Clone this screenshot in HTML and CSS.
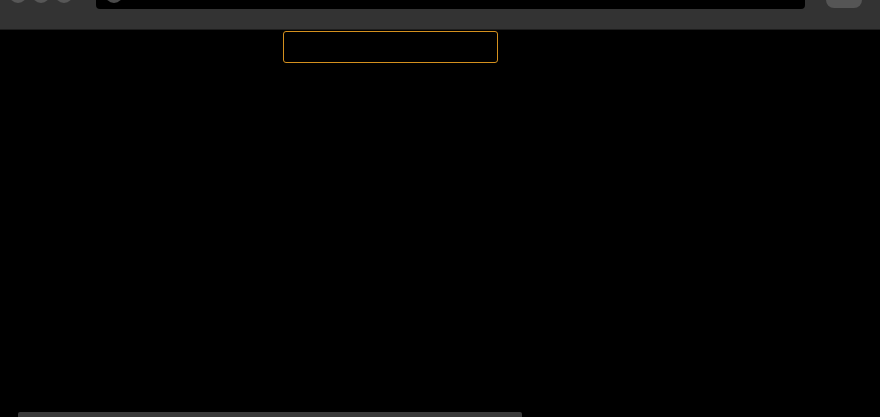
FILE: index.html
```html
<!DOCTYPE html>
<html>
<head>
<meta charset="utf-8">
<link rel="stylesheet" href="styles.css">
</head>
<body>
<div class="app">
  <header class="toolbar">
    <div class="toolbar-row">
      <div class="lights">
        <span class="light"></span>
        <span class="light"></span>
        <span class="light"></span>
      </div>
      <div class="address">
        <span class="site-icon"></span>
      </div>
      <span class="pill"></span>
    </div>
  </header>
  <main class="content">
    <div class="focus-box"></div>
    <div class="hscroll"></div>
  </main>
</div>
</body>
</html>
```
FILE: styles.css
```css
html, body {
  margin: 0;
  padding: 0;
  background: #000;
  height: 100%;
  overflow: hidden;
  font-family: "Liberation Sans", Arial, sans-serif;
}
.app {
  display: flex;
  flex-direction: column;
  height: 417px;
}
.toolbar {
  height: 29px;
  background: #333333;
  border-bottom: 1px solid #1e1e1e;
  flex: none;
  overflow: hidden;
}
.toolbar-row {
  display: flex;
  align-items: flex-start;
  padding-left: 9px;
}
.lights {
  display: flex;
  gap: 5px;
  margin-top: -15.5px;
}
.light {
  width: 18px;
  height: 18px;
  border-radius: 50%;
  background: #575757;
}
.address {
  margin-left: 23px;
  margin-top: -11px;
  width: 709px;
  height: 20px;
  background: #000;
  border-radius: 4px;
  display: flex;
  align-items: flex-start;
}
.site-icon {
  margin-left: 9px;
  margin-top: -4.5px;
  width: 18px;
  height: 18px;
  border-radius: 50%;
  background: #4a4a4a;
}
.pill {
  margin-left: 21px;
  margin-top: -8px;
  width: 36px;
  height: 16px;
  border-radius: 8px;
  background: #555;
}
.content {
  flex: 1;
  position: relative;
  background: #000;
}
.focus-box {
  box-sizing: border-box;
  margin-top: 1px;
  margin-left: 283px;
  width: 215px;
  height: 32px;
  border: 1.5px solid #d4901e;
  border-radius: 3px;
}
.hscroll {
  position: absolute;
  left: 18px;
  bottom: 0;
  width: 504px;
  height: 5px;
  background: #3a3a3a;
  border-radius: 2px 2px 0 0;
}
```
